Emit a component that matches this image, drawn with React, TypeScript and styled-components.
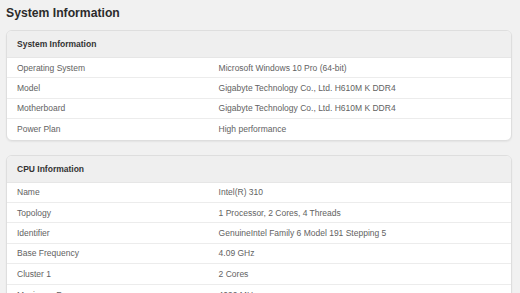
import React from "react";
import styled, { createGlobalStyle } from "styled-components";

const GlobalStyle = createGlobalStyle`
  html, body {
    margin: 0;
    padding: 0;
    background: #f1f1f1;
    font-family: "Liberation Sans", Arial, sans-serif;
  }
`;

const Page = styled.div`
  padding: 6px 8px 0 6px;
  display: flex;
  flex-direction: column;
`;

const Title = styled.h1`
  margin: 0 0 10px 0;
  font-size: 12.2px;
  line-height: 14px;
  font-weight: 700;
  color: #2b2b2b;
`;

const Card = styled.section`
  background: #ffffff;
  border: 1px solid #dedede;
  border-radius: 6px;
  box-shadow: 0 1px 2px rgba(0, 0, 0, 0.06);
  overflow: hidden;
  margin-bottom: 14px;
`;

const CardHeader = styled.div`
  height: 26px;
  display: flex;
  align-items: center;
  padding: 0 10px;
  background: #efefef;
  border-bottom: 1px solid #e6e6e6;
  font-size: 8.5px;
  font-weight: 700;
  color: #333333;
`;

const Row = styled.div<{ $last?: boolean }>`
  display: grid;
  grid-template-columns: 40% 60%;
  align-items: center;
  height: 20.4px;
  box-sizing: border-box;
  border-bottom: ${(p) => (p.$last ? "none" : "1px solid #ececec")};
  font-size: 8.5px;
  color: #626262;
`;

const Cell = styled.div`
  padding: 0 10px;
  white-space: nowrap;
`;

type Item = [string, string];

const systemInfo: Item[] = [
  ["Operating System", "Microsoft Windows 10 Pro (64-bit)"],
  ["Model", "Gigabyte Technology Co., Ltd. H610M K DDR4"],
  ["Motherboard", "Gigabyte Technology Co., Ltd. H610M K DDR4"],
  ["Power Plan", "High performance"],
];

const cpuInfo: Item[] = [
  ["Name", "Intel(R) 310"],
  ["Topology", "1 Processor, 2 Cores, 4 Threads"],
  ["Identifier", "GenuineIntel Family 6 Model 191 Stepping 5"],
  ["Base Frequency", "4.09 GHz"],
  ["Cluster 1", "2 Cores"],
  ["Maximum Frequency", "4090 MHz"],
];

const InfoCard: React.FC<{ title: string; items: Item[] }> = ({ title, items }) => (
  <Card>
    <CardHeader>{title}</CardHeader>
    {items.map(([k, v], i) => (
      <Row key={k} $last={i === items.length - 1}>
        <Cell>{k}</Cell>
        <Cell>{v}</Cell>
      </Row>
    ))}
  </Card>
);

export default function App() {
  return (
    <>
      <GlobalStyle />
      <Page>
        <Title>System Information</Title>
        <InfoCard title="System Information" items={systemInfo} />
        <InfoCard title="CPU Information" items={cpuInfo} />
      </Page>
    </>
  );
}
